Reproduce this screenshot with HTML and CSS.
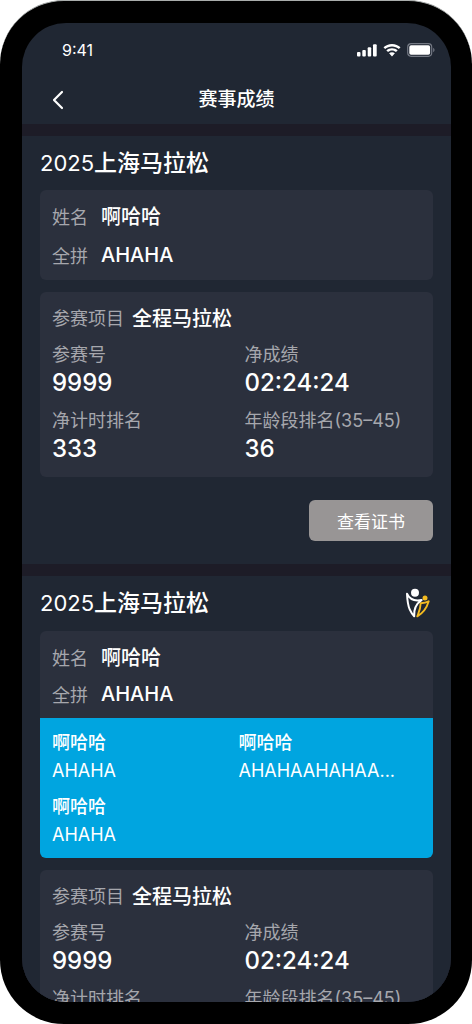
FILE: index.html
```html
<!DOCTYPE html>
<html lang="zh-CN">
<head>
<meta charset="utf-8">
<meta name="viewport" content="width=device-width, initial-scale=1">
<title>赛事成绩</title>
<link rel="stylesheet" href="styles.css">
</head>
<body>
<div class="phone">
  <div class="screen">
    <div class="status">
      <span class="time">9:41</span>
      <div class="status-icons">
        <svg width="20" height="13" viewBox="0 0 20 13" fill="#fff" aria-hidden="true">
          <rect x="0" y="8" width="3.5" height="4.5" rx="1"/>
          <rect x="5.3" y="6" width="3.5" height="6.5" rx="1"/>
          <rect x="10.7" y="3.3" width="3.5" height="9.2" rx="1"/>
          <rect x="16" y="0.3" width="3.7" height="12.2" rx="1"/>
        </svg>
        <svg width="18" height="13" viewBox="0 0 18 13" fill="#fff" aria-hidden="true">
          <path d="M9 0C5.6 0 2.600 1.300.5 3.300L2.100 5C4 3.300 6.300 2.400 9 2.400S14 3.300 15.900 5l1.600-1.700C15.400 1.300 12.400 0 9 0Z"/>
          <path d="M9 4.200c-2.200 0-4.200.8-5.700 2.100L5 8c1.100-.9 2.500-1.500 4-1.500s2.900.6 4 1.500l1.700-1.700C13.200 5 11.200 4.200 9 4.200Z"/>
          <path d="M9 8.300c-1.100 0-2.100.4-2.900 1L9 12.400l2.900-3.100c-.8-.6-1.800-1-2.900-1Z"/>
        </svg>
        <svg width="28" height="14" viewBox="0 0 28 14" aria-hidden="true">
          <rect x=".7" y=".7" width="24" height="12.600" rx="3.500" fill="none" stroke="#747984" stroke-width="1.200"/>
          <rect x="2.300" y="2.300" width="20.800" height="9.400" rx="1.800" fill="#fff"/>
          <path d="M26.200 4.800c1.800.8 1.800 3.600 0 4.400Z" fill="#747984"/>
        </svg>
      </div>
    </div>
    <header class="nav">
      <button class="back" type="button" aria-label="返回">
        <svg width="12" height="20" viewBox="0 0 12 20" fill="none" stroke="#fff" stroke-width="2.200" stroke-linecap="round" stroke-linejoin="round"><path d="M10 2 2 10l8 8"/></svg>
      </button>
      <h1 class="nav-title">赛事成绩</h1>
    </header>
    <main class="results">
      <section class="race">
        <h2 class="race-title"><span class="year">2025</span>上海马拉松</h2>
        <dl class="card person">
          <div class="row"><dt>姓名</dt><dd>啊哈哈</dd></div>
          <div class="row"><dt>全拼</dt><dd>AHAHA</dd></div>
        </dl>
        <dl class="card score">
          <div class="row event"><dt>参赛项目</dt><dd>全程马拉松</dd></div>
          <div class="stats">
            <div><dt>参赛号</dt><dd>9999</dd></div>
            <div><dt>净成绩</dt><dd>02:24:24</dd></div>
            <div><dt>净计时排名</dt><dd>333</dd></div>
            <div><dt>年龄段排名(35–45)</dt><dd>36</dd></div>
          </div>
        </dl>
        <button class="certificate" type="button">查看证书</button>
      </section>
      <section class="race relay">
        <div class="race-head">
          <h2 class="race-title"><span class="year">2025</span>上海马拉松</h2>
          <svg class="logo" width="25" height="32" viewBox="0 0 25 32" fill="none" stroke-linejoin="round" stroke-linecap="round" aria-hidden="true">
            <circle cx="10" cy="5.700" r="4" fill="#fff"/>
            <circle cx="20" cy="11" r="2.500" fill="#f4bb20"/>
            <path d="M15.700 16.300c3-.1 5.800-.7 8-2-1.600 5.500-5 11.500-11.400 15 1.400-3.800 3.200-7.200 3.400-13Z" stroke="#f4bb20" stroke-width="1.900"/>
            <path d="M2 6.700c.3 6.500 1 12 2.800 16 1 2.200 2.700 4.800 4.400 6.600-.6-6.600 2-12.500 7.500-16.300C10.500 14.200 4.500 12.500 2 6.700Z" fill="#202733" stroke="#fff" stroke-width="2"/>
          </svg>
        </div>
        <div class="team-card">
          <dl class="card person">
            <div class="row"><dt>姓名</dt><dd>啊哈哈</dd></div>
            <div class="row"><dt>全拼</dt><dd>AHAHA</dd></div>
          </dl>
          <ul class="members">
            <li><p>啊哈哈</p><p class="pinyin">AHAHA</p></li>
            <li><p>啊哈哈</p><p class="pinyin">AHAHAAHAHAA...</p></li>
            <li><p>啊哈哈</p><p class="pinyin">AHAHA</p></li>
          </ul>
        </div>
        <dl class="card score">
          <div class="row event"><dt>参赛项目</dt><dd>全程马拉松</dd></div>
          <div class="stats">
            <div><dt>参赛号</dt><dd>9999</dd></div>
            <div><dt>净成绩</dt><dd>02:24:24</dd></div>
            <div><dt>净计时排名</dt><dd>333</dd></div>
            <div><dt>年龄段排名(35–45)</dt><dd>36</dd></div>
          </div>
        </dl>
      </section>
    </main>
  </div>
</div>
</body>
</html>
```
FILE: styles.css
```css
* { box-sizing: border-box; margin: 0; padding: 0; }

body {
  background: #fff;
  color: #fff;
  font-family: Inter, "Noto Sans CJK SC", sans-serif;
  font-weight: 500;
}

button { border: 0; color: inherit; font-family: inherit; cursor: pointer; }
ul { list-style: none; }

.phone {
  height: 100vh;
  padding: 22px 21px 22px 22px;
  background: #000;
  border-top: 1px solid #a9adac;
  border-radius: 64px;
}

.screen {
  height: 100%;
  overflow: hidden;
  display: flex;
  flex-direction: column;
  background: #202733;
  border-radius: 44px;
}

.status {
  flex: none;
  display: flex;
  align-items: center;
  justify-content: space-between;
  height: 52px;
  padding: 2px 16px 0 40px;
}

.time { font-size: 16px; font-weight: 400; }

.status-icons { display: flex; align-items: center; gap: 6px; }

.nav {
  flex: none;
  display: grid;
  grid-template-columns: 1fr auto 1fr;
  align-items: center;
  height: 49px;
  padding: 0 26px;
}

.back {
  display: flex;
  align-items: center;
  justify-content: flex-start;
  width: 24px;
  height: 32px;
  padding-left: 4px;
  background: none;
}

.nav-title { font-size: 19px; line-height: 28px; font-weight: 500; }

.results {
  flex: 1;
  min-height: 0;
  overflow: hidden;
  background: #1d1c27;
}

.race {
  margin-top: 12px;
  padding: 12px 18px 23px;
  display: flex;
  flex-direction: column;
  gap: 12px;
  background: #202733;
}

.race-title { font-size: 23px; line-height: 30px; font-weight: 500; }
.year { font-size: 22px; font-weight: 400; }

.race-head { display: flex; align-items: center; justify-content: space-between; }

.logo { margin-right: 3px; }

.card { background: #2b303d; border-radius: 6px; }

dt { color: #a6a7ad; font-size: 18px; font-weight: 400; }

.person { padding: 6px 12px; }

.row { display: flex; align-items: center; }
.row dd { font-size: 20px; }
.person .row { height: 39px; gap: 13px; }

.score { padding: 9px 12px 13px; }
.event { height: 32px; gap: 8px; margin-bottom: 9px; }

.stats {
  display: grid;
  grid-template-columns: 1fr 1fr;
  gap: 10px 16px;
}
.stats dt { line-height: 26px; white-space: nowrap; }
.stats dd { font-size: 24px; line-height: 30px; }

.certificate {
  align-self: flex-end;
  width: 124px;
  height: 41px;
  margin-top: 11px;
  border-radius: 6px;
  background: #989595;
  font-size: 17px;
  font-weight: 400;
}

.team-card { border-radius: 6px; overflow: hidden; }
.team-card .card { padding: 7px 12px 6px; border-radius: 0; }
.team-card .row { height: 37px; }

.relay { padding-top: 11px; }
.relay .race-title { line-height: 32px; }

.members {
  display: grid;
  grid-template-columns: 1fr 1fr;
  gap: 9px 4px;
  padding: 11px 12px 10px;
  background: #00a5e0;
  font-size: 18px;
  line-height: 28px;
}
.members li { min-width: 0; }
.pinyin {
  font-weight: 400;
  line-height: 27px;
  white-space: nowrap;
  overflow: hidden;
  text-overflow: ellipsis;
}
```
